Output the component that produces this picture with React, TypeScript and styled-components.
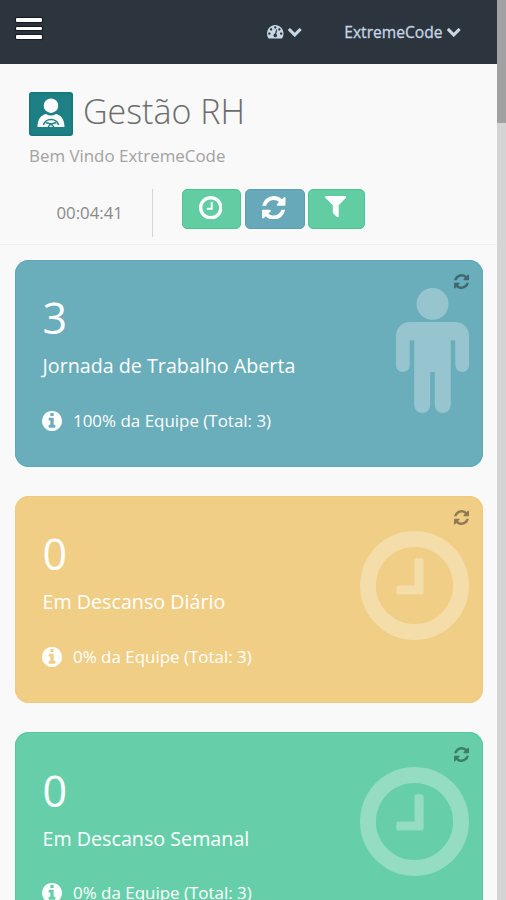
import React from 'react';
import styled, { createGlobalStyle } from 'styled-components';

const GlobalStyle = createGlobalStyle`
  * { box-sizing: border-box; }
  body {
    margin: 0;
    background: #f9f9f9;
    font-family: "Open Sans", "Noto Sans", sans-serif;
    overflow: hidden;
  }
`;

const icons = {
  clock: {
    box: '128 128 1536 1536',
    d: 'M1024 544v448q0 14-9 23t-23 9h-320q-14 0-23-9t-9-23v-64q0-14 9-23t23-9h224v-352q0-14 9-23t23-9h64q14 0 23 9t9 23zm416 352q0-148-73-273t-198-198-273-73-273 73-198 198-73 273 73 273 198 198 273 73 273-73 198-198 73-273zm224 0q0 209-103 385.5t-279.5 279.5-385.5 103-385.5-103-279.5-279.5-103-385.5 103-385.5 279.5-279.5 385.5-103 385.5 103 279.5 279.5 103 385.5z',
  },
  refresh: {
    box: '128 128 1536 1536',
    d: 'M1639 1056q0 5-1 7-64 268-268 434.5t-478 166.5q-146 0-282.5-55t-243.5-157l-129 129q-19 19-45 19t-45-19-19-45v-448q0-26 19-45t45-19h448q26 0 45 19t19 45-19 45l-137 137q71 66 161 102t187 36q134 0 250-65t186-179q11-17 53-117 8-23 30-23h192q13 0 22.5 9.5t9.5 22.5zm25-800v448q0 26-19 45t-45 19h-448q-26 0-45-19t-19-45 19-45l138-138q-148-137-349-137-134 0-250 65t-186 179q-11 17-53 117-8 23-30 23h-199q-13 0-22.5-9.5t-9.5-22.5v-7q65-268 270-434.5t480-166.5q146 0 284 55.5t245 156.5l130-129q19-19 45-19t45 19 19 45z',
  },
  filter: {
    box: '192 256 1408 1408',
    d: 'M1595 295q17 41-14 70l-493 493v742q0 42-39 59-13 5-25 5-27 0-45-19l-256-256q-19-19-19-45v-486l-493-493q-31-29-14-70 17-39 59-39h1280q42 0 59 39z',
  },
  person: {
    box: '384 32 1024 1760',
    d: 'M1408 704v416q0 40-28 68t-68 28-68-28-28-68v-352h-64v912q0 46-33 79t-79 33-79-33-33-79v-464h-64v464q0 46-33 79t-79 33-79-33-33-79v-912h-64v352q0 40-28 68t-68 28-68-28-28-68v-416q0-80 56-136t136-56h640q80 0 136 56t56 136zm-288-448q0 93-65.5 158.5t-158.5 65.5-158.5-65.5-65.5-158.5 65.5-158.5 158.5-65.5 158.5 65.5 65.5 158.5z',
  },
  info: {
    box: '128 128 1536 1536',
    d: 'M1152 1376v-160q0-14-9-23t-23-9h-96v-512q0-14-9-23t-23-9h-320q-14 0-23 9t-9 23v160q0 14 9 23t23 9h96v320h-96q-14 0-23 9t-9 23v160q0 14 9 23t23 9h448q14 0 23-9t9-23zm-128-896v-160q0-14-9-23t-23-9h-192q-14 0-23 9t-9 23v160q0 14 9 23t23 9h192q14 0 23-9t9-23zm640 416q0 209-103 385.5t-279.5 279.5-385.5 103-385.5-103-279.5-279.5-103-385.5 103-385.5 279.5-279.5 385.5-103 385.5 103 279.5 279.5 103 385.5z',
  },
  chevron: {
    box: '90 533 1612 1035',
    d: 'M1683 808l-742 741q-19 19-45 19t-45-19l-742-741q-19-19-19-45.5t19-45.5l166-165q19-19 45-19t45 19l531 531 531-531q19-19 45-19t45 19l166 165q19 19 19 45.5t-19 45.5z',
  },
  gauge: {
    box: '0 256 1792 1408',
    d: 'M384 1152q0-53-37.5-90.5t-90.5-37.5-90.5 37.5-37.5 90.5 37.5 90.5 90.5 37.5 90.5-37.5 37.5-90.5zm192-448q0-53-37.5-90.5t-90.5-37.5-90.5 37.5-37.5 90.5 37.5 90.5 90.5 37.5 90.5-37.5 37.5-90.5zm428 481l101-382q6-26-7.5-48.5t-38.5-29.5-48 6.5-30 39.5l-101 382q-60 5-107 43.5t-63 98.5q-20 77 20 146t117 89 146-20 89-117q16-60-6-117t-72-91zm660-33q0-53-37.5-90.5t-90.5-37.5-90.5 37.5-37.5 90.5 37.5 90.5 90.5 37.5 90.5-37.5 37.5-90.5zm-640-640q0-53-37.5-90.5t-90.5-37.5-90.5 37.5-37.5 90.5 37.5 90.5 90.5 37.5 90.5-37.5 37.5-90.5zm448 192q0-53-37.5-90.5t-90.5-37.5-90.5 37.5-37.5 90.5 37.5 90.5 90.5 37.5 90.5-37.5 37.5-90.5zm320 448q0 261-141 483-19 29-54 29h-1402q-35 0-54-29-141-221-141-483 0-182 71-348t191-286 286-191 348-71 348 71 286 191 191 286 71 348z',
  },
};

type IconName = keyof typeof icons;

const Svg = styled.svg<{ $w: number; $h: number }>`
  display: block;
  flex: none;
  width: ${(p) => p.$w}px;
  height: ${(p) => p.$h}px;
  fill: currentColor;
`;

const Icon = ({ name, w, h = w }: { name: IconName; w: number; h?: number }) => (
  <Svg $w={w} $h={h} viewBox={icons[name].box} preserveAspectRatio="none" aria-hidden="true">
    <path d={icons[name].d} />
  </Svg>
);

const Screen = styled.div`
  display: grid;
  grid-template-columns: 497px 9px;
  height: 900px;
  overflow: hidden;
`;

const Page = styled.main`
  height: 900px;
  overflow: hidden;
`;

const ScrollTrack = styled.aside`
  background: #d4d4d4;
`;

const ScrollThumb = styled.div`
  height: 123px;
  background: #a1a1a1;
`;

const TopBar = styled.header`
  display: flex;
  align-items: flex-start;
  height: 63.5px;
  padding-left: 16px;
  background: #2c343e;
  color: #c6d6e4;
`;

const MenuButton = styled.button`
  display: flex;
  flex-direction: column;
  gap: 5px;
  width: 25.5px;
  margin: 18px 225.5px 0 0;
  padding: 0;
  border: 0;
  background: none;
`;

const MenuLine = styled.span`
  height: 3.7px;
  border-radius: 1px;
  background: #fff;
  box-shadow: 0 0 1px 1px #14181f;
`;

const NavItem = styled.div<{ $left?: number }>`
  display: flex;
  align-items: center;
  gap: 4.5px;
  height: 24px;
  margin-top: 20px;
  margin-left: ${(p) => p.$left ?? 0}px;
  font-size: 15.6px;
  line-height: 24px;
  -webkit-text-stroke: 0.3px currentColor;
  white-space: nowrap;
`;

const PageHead = styled.section`
  height: 181px;
  padding: 28.5px 0 0 29px;
  border-bottom: 1.5px solid #efefef;
`;

const TitleRow = styled.div`
  display: flex;
  gap: 10px;
  height: 44px;
`;

const Title = styled.h1`
  margin: -4.5px 0 0;
  font-size: 34px;
  font-weight: 350;
  line-height: 46px;
  color: #6c6c6c;
  white-space: nowrap;
`;

const Welcome = styled.p`
  margin: 9px 0 0;
  font-size: 16.9px;
  line-height: 22px;
  color: #a2a2a2;
`;

const Tools = styled.div`
  display: flex;
  height: 48px;
  margin-top: 21.5px;
`;

const Timer = styled.time`
  width: 124px;
  padding-left: 27.5px;
  border-right: 1.5px solid #d6d6d6;
  font-size: 16.8px;
  line-height: 47px;
  color: #8a8a8a;
`;

const ToolButtons = styled.div`
  display: flex;
  gap: 3.5px;
  margin-left: 28.5px;
`;

const ToolButton = styled.button<{ $bg: string; $edge: string; $w: number }>`
  display: flex;
  justify-content: center;
  width: ${(p) => p.$w}px;
  height: 40px;
  padding: 6px 1.5px 0 0;
  border: 1px solid ${(p) => p.$edge};
  border-radius: 5px;
  background: ${(p) => p.$bg};
  color: #fff;
`;

const Cards = styled.section`
  display: flex;
  flex-direction: column;
  gap: 29px;
  padding: 15px 14px 0 14.5px;
`;

const CardBox = styled.article<{ $bg: string; $edge: string }>`
  position: relative;
  height: 207.4px;
  flex: none;
  padding: 29.5px 0 0 28px;
  border-radius: 14px;
  background: ${(p) => p.$bg};
  box-shadow: inset 0 0 0 1px ${(p) => p.$edge};
  color: #fff;
`;

const Count = styled.div`
  font-size: 43px;
  line-height: 58px;
`;

const Label = styled.div`
  margin-top: 5px;
  font-size: 19.7px;
  line-height: 28px;
`;

const Detail = styled.div`
  display: flex;
  align-items: center;
  gap: 11px;
  margin: 27.5px 0 0 -0.5px;
  font-size: 16.95px;
  line-height: 26px;
`;

const Watermark = styled.div<{ $top: number }>`
  position: absolute;
  top: ${(p) => p.$top}px;
  right: 14px;
  color: rgba(255, 255, 255, 0.3);
`;

const Reload = styled.button`
  position: absolute;
  top: 14.5px;
  right: 14px;
  padding: 0;
  border: 0;
  background: none;
  color: rgba(0, 0, 0, 0.4);
`;

const AvatarSvg = styled.svg`
  display: block;
  width: 44px;
  height: 44px;
`;

const Avatar = () => (
  <AvatarSvg viewBox="0 0 44 44" aria-hidden="true">
    <rect width="44" height="44" rx="3" fill="#15777b" />
    <rect x="1.5" y="1.5" width="41" height="41" rx="2" fill="#1c8084" />
    <circle cx="22" cy="13.7" r="7.2" fill="#fff" />
    <path d="M8.5 35c0-7.500 3.500-12 8.500-13q5 3 10 0c5 1 8.500 5.500 8.500 13z" fill="#fff" />
    <path d="M14.500 33a7.600 6.500 0 0 1 15 0" fill="none" stroke="#1c8084" strokeWidth="1.600" />
    <path d="M16.500 30.500l5.500 1.500 5.500-1.500M19 35l3-3 3 3" fill="none" stroke="#1c8084" strokeWidth="1.300" />
  </AvatarSvg>
);

const cards = [
  { count: 3, label: 'Jornada de Trabalho Aberta', pct: '100%', bg: '#6aadbb', edge: '#5da9ba', icon: 'person' as IconName, w: 73, h: 125, top: 28 },
  { count: 0, label: 'Em Descanso Diário', pct: '0%', bg: '#f1ce85', edge: '#f1ca7a', icon: 'clock' as IconName, w: 109, h: 109, top: 35 },
  { count: 0, label: 'Em Descanso Semanal', pct: '0%', bg: '#66cfa9', edge: '#54c99d', icon: 'clock' as IconName, w: 109, h: 109, top: 35 },
];

export default function App() {
  return (
    <>
      <GlobalStyle />
      <Screen>
        <Page>
          <TopBar>
            <MenuButton aria-label="Menu">
              <MenuLine />
              <MenuLine />
              <MenuLine />
            </MenuButton>
            <NavItem>
              <Icon name="gauge" w={16.5} h={13.5} />
              <Icon name="chevron" w={13.5} h={9} />
            </NavItem>
            <NavItem $left={42.8}>
              ExtremeCode
              <Icon name="chevron" w={13.5} h={9} />
            </NavItem>
          </TopBar>
          <PageHead>
            <TitleRow>
              <Avatar />
              <Title>Gestão RH</Title>
            </TitleRow>
            <Welcome>Bem Vindo ExtremeCode</Welcome>
            <Tools>
              <Timer>00:04:41</Timer>
              <ToolButtons>
                <ToolButton $bg="#62cca3" $edge="#4dc496" $w={59.8} aria-label="Horário">
                  <Icon name="clock" w={23.5} />
                </ToolButton>
                <ToolButton $bg="#68a9b9" $edge="#5a9fb1" $w={59.8} aria-label="Atualizar">
                  <Icon name="refresh" w={23.5} />
                </ToolButton>
                <ToolButton $bg="#62cca3" $edge="#4dc496" $w={56.5} aria-label="Filtrar">
                  <Icon name="filter" w={21.5} />
                </ToolButton>
              </ToolButtons>
            </Tools>
          </PageHead>
          <Cards>
            {cards.map((c) => (
              <CardBox key={c.label} $bg={c.bg} $edge={c.edge}>
                <Count>{c.count}</Count>
                <Label>{c.label}</Label>
                <Detail>
                  <Icon name="info" w={20} />
                  <span>{c.pct} da Equipe (Total: 3)</span>
                </Detail>
                <Watermark $top={c.top}>
                  <Icon name={c.icon} w={c.w} h={c.h} />
                </Watermark>
                <Reload aria-label="Atualizar">
                  <Icon name="refresh" w={15} />
                </Reload>
              </CardBox>
            ))}
          </Cards>
        </Page>
        <ScrollTrack>
          <ScrollThumb />
        </ScrollTrack>
      </Screen>
    </>
  );
}
